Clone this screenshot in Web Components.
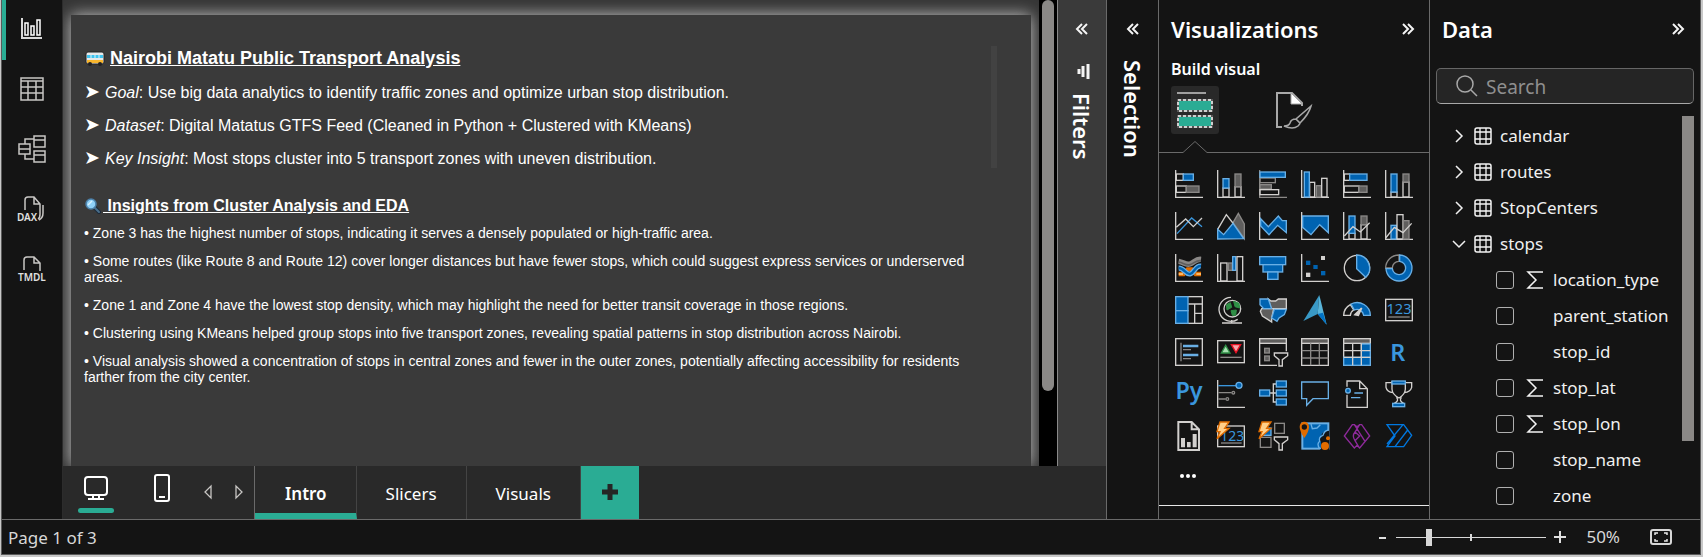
<!DOCTYPE html>
<html lang="en">
<head>
<meta charset="utf-8">
<title>Nairobi Matatu report</title>
<style>
  html, body { margin: 0; }
  body { background: #c8c8c8; font: 17px/24px "Noto Sans", "Open Sans", sans-serif; color: #f0f0f0; }
</style>
</head>
<body>
<report-app></report-app>

<script>
const W = '#d2d0ce', G = '#8a8886', D = '#5f5e5d', B = '#0063b1', L = '#69afe5', O = '#e06c00';
const rect = (x, y, x2, y2, s = W, f = 'none', w = 4) =>
  `<rect x="${x}" y="${y}" width="${x2 - x}" height="${y2 - y}" stroke="${s}" fill="${f}" stroke-width="${w}"/>`;
const line = (p, s = W, w = 4, f = 'none') => `<path d="${p}" stroke="${s}" stroke-width="${w}" fill="${f}"/>`;
const axis = line('M2 0V82H84', W, 4);
const funnel = line('M46 45H86V53L70 65V84H60V65L46 53Z', W, 4, '#141414');
const bolt = line('M9 0H36L23 19H36L0 50L9 29H0Z', O, 4, '#ffd08a');
const digits = `<text x="42" y="54" text-anchor="middle" font-size="44" fill="#3a96dd" font-family="Noto Sans">123</text>`;
const sheet = line('M2 2H82V82H2Z') + rect(2, 2, 82, 16, W, '#605e5c');

/* visual gallery artwork, drawn on an 84-unit grid */
const VISUALS = [
  ['Stacked bar chart', axis + rect(4,12,25,31) + rect(25,12,55,31,L,B) + rect(4,48,34,67) + rect(34,48,72,67,G,D)],
  ['Stacked column chart', axis + rect(18,54,36,81) + rect(18,26,36,54,L,B) + rect(54,50,72,81) + rect(54,12,72,50,G,D)],
  ['Clustered bar chart', line('M2 0V82H84',G) + rect(3,24,49,38,G) + rect(3,6,79,22,L,B) + rect(3,44,37,57,G,D) + rect(3,59,59,74)],
  ['Clustered column chart', axis + rect(26,37,41,81) + rect(10,6,25,81,L,B) + rect(46,47,61,81,G,D) + rect(62,25,78,81)],
  ['100% stacked bar chart', axis + rect(4,12,20,31) + rect(20,12,72,31,L,B) + rect(4,48,48,67) + rect(48,48,72,67,G,D)],
  ['100% stacked column chart', axis + rect(18,66,36,81) + rect(18,12,36,66,L,B) + rect(54,36,72,81) + rect(54,12,72,36,G,D)],

  ['Line chart', axis + line('M6 65L50 18L81 44','#3a96dd') + line('M4 46L32 21L55 44L81 18')],
  ['Area chart', line('M48 32L64 4L82 36V80Z',G,4,D) + line('M2 52L28 8L50 36') + line('M2 81V52L20 68L48 34L80 80Z',L,4,B)],
  ['Stacked area chart', axis + line('M5 20L28 44L58 12L70 26H82V62L56 40L30 68L5 42Z',L,4,B)],
  ['100% stacked area chart', axis + line('M5 12H82V62L56 38L30 68L5 46Z',L,4,B)],
  ['Line and stacked column chart', axis + rect(18,64,36,81) + rect(18,12,36,64,L,B) + rect(54,38,72,81) + rect(54,12,72,38,G,D) + line('M4 72L30 44L52 60L80 32')],
  ['Line and clustered column chart', axis + rect(18,40,34,81,L,B) + rect(36,8,54,81) + rect(55,26,72,81,G,D) + line('M2 78L28 46L54 62L80 34')],

  ['Ribbon chart', axis + line('M11 22C26 24 32 34 45 30S62 14 78 16',G,16) + line('M11 24C26 26 32 36 45 32S62 18 78 20',D,5) + line('M11 60H26L38 46H50L62 60H78',O,13) + line('M11 60H24M64 60H78','#ffd08a',5) + line('M11 42C28 42 32 62 45 60S60 34 78 36',L,15) + line('M11 42C28 42 32 62 45 60S60 34 78 36',B,7)],
  ['Waterfall chart', axis + rect(11,27,30,81) + rect(34,27,46,49,G,D) + rect(47,8,56,49,L,B) + rect(60,8,77,81)],
  ['Funnel', rect(2,8,80,32,L,B) + rect(12,32,71,54,L,B) + rect(26,54,57,76,L,B)],
  ['Scatter chart', axis + rect(60,6,72,18,'none',W) + rect(15,20,28,33,'none',B) + rect(37,33,50,45,'none',B) + rect(60,51,73,64,'none',B) + rect(15,56,28,69,'none',W)],
  ['Pie chart', `<circle cx="42" cy="42" r="38" fill="none" stroke="${W}" stroke-width="4"/>` + line('M41 3A39 39 0 0 1 68 70L41 44Z',L,4,B)],
  ['Donut chart', line('M2 42A39 39 0 0 1 42 3V22A20 20 0 0 0 22 42Z',G) + line('M44 3A39 39 0 1 1 3 44H22A20 20 0 1 0 44 22Z',L,4,B)],

  ['Treemap', rect(2,2,82,82) + line('M40 24H82M59 24V82M59 52H82') + rect(2,2,39,44,L,B) + rect(2,44,39,82,L,B)],
  ['Map', `<circle cx="46" cy="38" r="25" stroke="${W}" stroke-width="4" fill="#141414"/>` + line('M28 26L40 20L44 34L30 42ZM50 16L66 22L68 36L54 32ZM42 44L58 42L56 58L46 58Z','#2f8f46',3,'#2f8f46') + line('M42 4A36 36 0 1 0 62 70M44 72V80M15 81H75')],
  ['Filled map', line('M28 9L36 15H50L58 9H82V38H36Z',W,4,D) + line('M8 38H44L38 66V78L26 70L10 60L4 46Z',W,4,D) + line('M3 9H28L38 38H14L3 26Z',L,4,B) + line('M46 40H82L76 56L60 66L54 76L38 66Z',L,4,B)],
  ['Azure map', `<path d="M55-3L7 75L50 54Z" fill="#3999c6"/><path d="M55-3L77 86L50 54Z" fill="#59b4d9"/><path d="M50 54L77 86L66 50Z" fill="#0072c6"/>`],
  ['Gauge', line('M2 58A40 38 0 0 1 22 26L32 42A20 20 0 0 0 22 58Z') + line('M24 24A40 38 0 0 1 82 58H62A20 20 0 0 0 34 42Z',L,4,B) + line('M36 56L56 36L46 58Z',W,5,W)],
  ['Card', rect(2,10,82,74,W) + line('M10 63H74',G) + digits],

  ['Multi-row card', rect(2,2,82,82) + line('M18 14V70M24 35H48M24 62H48',G) + line('M24 24H70M24 51H70',L,7)],
  ['KPI', rect(2,8,82,74) + line('M10 58H74',G) + line('M13 45L26 22L39 45Z','#2f8f46',4,'#a8dfb2') + line('M43 20H71L57 44Z','#e81123',4,'#f7a6ac')],
  ['Slicer', line('M82 40V2H2V82H54') + rect(2,2,82,16,W,D) + rect(17,31,31,45,G,D) + rect(17,54,31,68,G,D) + funnel],
  ['Table', sheet + line('M2 38H82M2 60H82M29 16V82M55 16V82',G)],
  ['Matrix', sheet + rect(55,18,82,82,L,B) + rect(2,58,82,82,L,B) + line('M2 38H82M2 58H82M29 16V82M55 16V82',W)],
  ['R script visual', `<text x="38" y="70" text-anchor="middle" font-size="70" font-weight="600" fill="#3a96dd" font-family="Noto Sans">R</text>`],

  ['Python visual', `<text x="42" y="58" text-anchor="middle" font-size="70" font-weight="600" fill="#3a96dd" font-family="Noto Sans">Py</text>`],
  ['Key influencers', axis + line('M4 17H60','#3a96dd') + line('M4 38H44M4 57H26',G) + `<g stroke-width="4"><circle cx="66" cy="16" r="9" fill="${B}" stroke="${L}"/><circle cx="49" cy="38" r="4" fill="none" stroke="${G}"/><circle cx="31" cy="57" r="4" fill="none" stroke="${G}"/></g>`],
  ['Decomposition tree', line('M32 39H52M52 12H43V66H52') + rect(2,30,32,48,L,B) + rect(52,3,82,21,L,B) + rect(52,30,82,48,L,B) + rect(52,57,82,75,L,B)],
  ['Q&amp;A', line('M2 6H82V56H36L17 76V56H2Z',L)],
  ['Narrative', line('M12 20V3H50L73 26V82H12V44M50 3V26H73') + line('M34 39H60M24 53H52',L) + `<circle cx="15" cy="32" r="7" fill="${B}" stroke="${L}" stroke-width="4"/>`],
  ['Goals', line('M21 5V28Q22 44 42 54Q60 44 61 28V5ZM21 8H3V22Q6 36 24 38M61 8H80V22Q76 36 58 38M34 52Q44 62 28 70M50 52Q40 62 56 70') + rect(21,3,61,12,L,B) + rect(23,70,59,80,L,B)],

  ['Paginated report', line('M10 0H50L72 22V84H10ZM50 0V22H72',W,6) + `<path d="M18 48H30V76H18ZM36 60H47V76H36ZM53 36H65V76H53Z" fill="${W}"/>`],
  ['New card', rect(2,12,82,74) + line('M12 63H74',G) + `<text x="46" y="56" text-anchor="middle" font-size="42" fill="#3a96dd" font-family="Noto Sans">123</text>` + bolt],
  ['New slicer', rect(47,4,76,34,G) + rect(4,46,36,76,G) + rect(8,18,36,40,L,B) + funnel + bolt],
  ['ArcGIS maps', rect(4,4,82,80,L,B,6) + `<path d="M60 80V60Q50 50 62 46Q58 28 84 26V86H54Z" fill="#141414"/>` + line('M56 80Q46 66 56 58Q52 44 66 40Q70 26 82 24M30 6L34 20L48 18L58 8',L) + `<path d="M-4 14A14 15 0 0 1 24 14Q24 28 10 48Q-4 28-4 14Z" fill="${O}"/><circle cx="10" cy="15" r="8" fill="#141414"/><circle cx="72" cy="72" r="12" fill="${O}"/><circle cx="81" cy="49" r="6" fill="${O}"/>`],
  ['Power Apps', line('M28 8L4 42L34 78L42 70L50 78L80 42L56 8H50L42 14L34 8ZM34 8L66 58M50 8L36 30Q26 42 36 56L48 76M36 30L50 42L36 56','#8e2a9b',4)],
  ['Power Automate', line('M6 8H56L80 40L56 74H6L30 42ZM54 8L6 66M68 24L30 74','#0078e0',4)],
];

/* shell icons: [width, height, markup] */
const ICONS = {
  report: [22, 22, '<path d="M1 0V20H21" stroke="#d8d8d8" stroke-width="2"/><path d="M4 5H7V17H4ZM10 8H13V17H10ZM16 2H19V17H16Z" stroke="#fff" stroke-width="1.5"/>'],
  table: [24, 24, '<path d="M1 1H23V23H1ZM1 4H23M1 10H23M1 16H23M8 4V23M16 4V23" stroke="#c8c6c4" stroke-width="1.5"/>'],
  model: [28, 28, '<path d="M1 9H12V19H1ZM1 14H12M16 1H27V12H16ZM16 5H27M16 16H27V27H16ZM16 20H27M7 9V4H16M7 19V24H16" stroke="#c8c6c4" stroke-width="1.5"/>'],
  dax: [28, 26, '<path d="M7 14V4Q7 1 10 1H16L22 8V18Q22 22 20 23M16 1V8H22M25 9V17Q25 22 21 24" stroke="#c8c6c4" stroke-width="1.5"/><text x="-1" y="25" font-size="10" font-weight="600" fill="#e0e0e0" font-family="Noto Sans">DAX</text>'],
  tmdl: [28, 26, '<path d="M6 14V4Q6 1 9 1H16L22 7V15M16 1V7H22" stroke="#c8c6c4" stroke-width="1.5"/><text x="0" y="25" font-size="10" font-weight="600" fill="#e0e0e0" font-family="Noto Sans">TMDL</text>'],
  collapse: [12, 12, '<path d="M6 1L1 6L6 11M11 1L6 6L11 11" stroke="#f4f4f4" stroke-width="2"/>'],
  expand: [12, 12, '<path d="M1 1L6 6L1 11M6 1L11 6L6 11" stroke="#f4f4f4" stroke-width="2"/>'],
  filter: [14, 15, '<path d="M13 0V15M8 2V13M4 5V10" stroke="#f4f4f4" stroke-width="3"/>'],
  desktop: [24, 24, '<rect x="1" y="1" width="22" height="18" rx="3" stroke="#fff" stroke-width="2"/><path d="M4 23H20M9 19V23M15 19V23" stroke="#fff" stroke-width="2"/>'],
  phone: [16, 28, '<rect x="1" y="1" width="14" height="26" rx="2" stroke="#fff" stroke-width="2"/><path d="M5 23H11" stroke="#fff" stroke-width="2"/>'],
  prev: [8, 14, '<path d="M7 1V13L1 7Z" stroke="#c8c6c4" stroke-width="1.3"/>'],
  next: [8, 14, '<path d="M1 1V13L7 7Z" stroke="#c8c6c4" stroke-width="1.3"/>'],
  add: [18, 18, '<path d="M9 1V17M1 9H17" stroke="#252525" stroke-width="5"/>'],
  build: [36, 36, '<path d="M0 1H29" stroke="#a0a0a0" stroke-width="2"/><path d="M1 8H35V19H1ZM1 24H35V35H1Z" fill="#2aac94" stroke="#555" stroke-width="2"/><path d="M1 8H35V19H1ZM1 24H35V35H1Z" stroke="#d0d0d0" stroke-width="2" stroke-dasharray="3 2"/>'],
  format: [36, 36, '<path d="M6 35H1V1H16L26 11V14" stroke="#a8a8a8" stroke-width="2"/><path d="M15 1V12H26Z" fill="#fff" stroke="#a8a8a8"/><path d="M35 14L20 27L24 31Q33 22 35 14ZM20 27Q15 27 14 31Q13 34 8 34Q17 38 22 34Q24 32 24 31" stroke="#a8a8a8" stroke-width="1.6"/>'],
  search: [22, 22, '<circle cx="9" cy="9" r="8" stroke="#a8a8a8" stroke-width="1.5"/><path d="M15 15L21 21" stroke="#a8a8a8" stroke-width="1.5"/>'],
  closed: [12, 12, '<path d="M3 0L9 6L3 12" stroke="#f0f0f0" stroke-width="1.5"/>'],
  open: [12, 12, '<path d="M0 3L6 9L12 3" stroke="#f0f0f0" stroke-width="1.5"/>'],
  grid: [18, 18, '<rect x="1" y="1" width="16" height="16" rx="2" stroke="#f4f4f4" stroke-width="1.5"/><path d="M1 5H17M1 12H17M6 1V17M12 1V17" stroke="#f4f4f4" stroke-width="1.3"/>'],
  sigma: [17, 18, '<path d="M16 1H1L9 9L1 17H16" stroke="#f4f4f4" stroke-width="1.5"/>'],
  none: [17, 18, ''],
  fit: [22, 16, '<rect x="1" y="1" width="20" height="14" rx="2" stroke="#d8d8d8" stroke-width="2"/><path d="M8 4H5V6M5 10V12H8M14 4H17V6M17 10V12H14" stroke="#e8e8e8" stroke-width="1.5"/>'],
  bus: [18, 16, '<rect x="0" y="2" width="18" height="12" rx="2" fill="#e8e8e8" stroke="#222" stroke-width="1"/><path d="M1 5H17V8H1Z" fill="#3fc3ee"/><path d="M5 5V8M9 5V8M13 5V8" stroke="#d9f4ff"/><path d="M1 10H17V13H1Z" fill="#f8b62d"/><circle cx="4" cy="14" r="2" fill="#222"/><circle cx="14" cy="14" r="2" fill="#222"/>'],
  lens: [16, 16, '<path d="M9 9L14 14" stroke="#1d2b3a" stroke-width="4" stroke-linecap="round"/><path d="M9 9L14 14" stroke="#4a6f8c" stroke-width="2" stroke-linecap="round"/><circle cx="6" cy="6" r="5" fill="#8fd0f7" stroke="#4b7fa8" stroke-width="1.5"/><path d="M3 7L7 3" stroke="#d9f1ff" stroke-width="1.5"/>'],
};

const RESET = `
  *, *::before, *::after { box-sizing: border-box; }
  button { all: unset; box-sizing: border-box; cursor: pointer; display: flex; align-items: center; justify-content: center; }
  h1, h2, h3, p, ul { margin: 0; padding: 0; }
  ul { list-style: none; }
`;
function element(name, render) {
  customElements.define(name, class extends HTMLElement {
    constructor() {
      super();
      this.attachShadow({ mode: 'open' });
    }
    connectedCallback() {
      const t = document.createElement('template');
      t.innerHTML = render(this);
      this.shadowRoot.replaceChildren(t.content.cloneNode(true));
    }
  });
}

element('ui-icon', el => {
  const [w, h, art] = ICONS[el.getAttribute('name')];
  return `<style>:host { display: inline-flex; flex: none; } svg { overflow: visible; display: block; }</style>
    <svg width="${w}" height="${h}" viewBox="0 0 ${w} ${h}" fill="none" aria-hidden="true">${art}</svg>`;
});

element('nav-rail', () => `
  <style>${RESET}
    :host { display: block; background: #141414; border-right: 1px solid #2c2c2c; }
    nav { display: flex; flex-direction: column; }
    button { height: 60px; padding-bottom: 2px; }
    button.on { border-left: 4px solid #2aac94; padding-right: 4px; }
  </style>
  <nav aria-label="Views">
    <button class="on" aria-label="Report view"><ui-icon name="report"></ui-icon></button>
    <button aria-label="Table view"><ui-icon name="table"></ui-icon></button>
    <button aria-label="Model view"><ui-icon name="model"></ui-icon></button>
    <button aria-label="DAX query view"><ui-icon name="dax"></ui-icon></button>
    <button aria-label="TMDL view"><ui-icon name="tmdl"></ui-icon></button>
  </nav>`);

element('report-canvas', () => `
  <style>${RESET}
    :host { display: grid; grid-template-columns: minmax(0, 1fr) 18px; background: #353535; overflow: hidden;
            font-family: "Liberation Sans", Arial, sans-serif; color: #fff; }
    .page { margin: 15px 8px 0; padding: 31px 13px 0; background: #3a3a3a; box-shadow: 0 0 15px #c6c6c6; }
    .intro { display: flex; justify-content: space-between; height: 122px; margin-right: 21px; }
    .bar { width: 6px; background: #424242; flex: none; }
    h1, h2 { display: flex; align-items: center; }
    h1 { font-size: 18px; line-height: 24px; gap: 6px; padding-left: 2px; }
    h2 { font-size: 16px; line-height: 20px; gap: 2px; padding-left: 1px; margin-top: 28px; }
    u { white-space: pre; }
    .lead { font-size: 16px; line-height: 33px; padding-top: 5px; }
    .lead li { display: flex; align-items: baseline; height: 33px; white-space: pre; }
    .lead span { width: 21px; font-size: 19px; font-family: "DejaVu Sans", sans-serif; }
    .notes { font-size: 14px; line-height: 16px; display: flex; flex-direction: column; gap: 12px; margin: 9px 46px 0 0; }
    .track { background: #000; padding: 0 3px; }
    .thumb { height: 391px; border-radius: 6px; background: #8a8886; }
  </style>
  <article class="page">
    <div class="intro">
      <div>
        <h1><ui-icon name="bus"></ui-icon><u>Nairobi Matatu Public Transport Analysis</u></h1>
        <ul class="lead">
          <li><span>➤</span><i>Goal</i>: Use big data analytics to identify traffic zones and optimize urban stop distribution.</li>
          <li><span>➤</span><i>Dataset</i>: Digital Matatus GTFS Feed (Cleaned in Python + Clustered with KMeans)</li>
          <li><span>➤</span><i>Key Insight</i>: Most stops cluster into 5 transport zones with uneven distribution.</li>
        </ul>
      </div>
      <div class="bar"></div>
    </div>
    <h2><ui-icon name="lens"></ui-icon><u> Insights from Cluster Analysis and EDA</u></h2>
    <ul class="notes">
      <li>• Zone 3 has the highest number of stops, indicating it serves a densely populated or high-traffic area.</li>
      <li>• Some routes (like Route 8 and Route 12) cover longer distances but have fewer stops, which could suggest express services or underserved areas.</li>
      <li>• Zone 1 and Zone 4 have the lowest stop density, which may highlight the need for better transit coverage in those regions.</li>
      <li>• Clustering using KMeans helped group stops into five transport zones, revealing spatial patterns in stop distribution across Nairobi.</li>
      <li>• Visual analysis showed a concentration of stops in central zones and fewer in the outer zones, potentially affecting accessibility for residents farther from the city center.</li>
    </ul>
  </article>
  <div class="track"><div class="thumb"></div></div>`);

element('page-tabs', () => `
  <style>${RESET}
    :host { display: flex; height: 53px; background: #292929; color: #fff; }
    .modes { display: flex; align-items: stretch; width: 192px; padding-left: 10px; border-right: 1px solid #6a6a6a; }
    .modes button { flex: none; flex-direction: column; justify-content: flex-start; padding-top: 10px; }
    .modes .view { width: 46px; }
    .view.on::after { content: ""; width: 36px; height: 5px; border-radius: 3px; background: #2aac94; margin-top: 8px; }
    .modes .view + .view { margin: 0 7px 0 20px; padding-top: 8px; }
    .modes .step { width: 31px; padding-top: 19px; }
    .tab { padding: 2px 29px 0; border-right: 1px solid #444; }
    .tab.on { font-weight: 600; border-bottom: 6px solid #2aac94; padding: 8px 29px 0 30px; }
    .add { width: 58px; background: #2aac94; padding-bottom: 2px; }
  </style>
  <div class="modes">
    <button class="view on" aria-label="Desktop layout"><ui-icon name="desktop"></ui-icon></button>
    <button class="view" aria-label="Mobile layout"><ui-icon name="phone"></ui-icon></button>
    <button class="step" aria-label="Previous page"><ui-icon name="prev"></ui-icon></button>
    <button class="step" aria-label="Next page"><ui-icon name="next"></ui-icon></button>
  </div>
  <button class="tab on">Intro</button>
  <button class="tab">Slicers</button>
  <button class="tab">Visuals</button>
  <button class="add" aria-label="New page"><ui-icon name="add"></ui-icon></button>`);

element('collapsed-pane', () => `
  <style>${RESET}
    :host { display: flex; flex-direction: column; align-items: center; padding-top: 23px; color: #fff; background: #141414; }
    h2 { writing-mode: vertical-rl; font-size: 22px; line-height: 28px; font-weight: 600; display: flex; align-items: center; gap: 14px; margin-top: 25px; }
    ::slotted(ui-icon) { margin-top: 4px; }
  </style>
  <button aria-label="Expand pane"><ui-icon name="collapse"></ui-icon></button>
  <h2><slot></slot></h2>`);

element('visual-gallery', () => `
  <style>${RESET}
    :host { display: grid; grid-template-columns: repeat(6, 28px); gap: 14px; }
    svg { display: block; overflow: visible; }
  </style>
  ${VISUALS.map(([label, art]) => `<button aria-label="${label}"><svg width="28" height="28" viewBox="0 0 84 84" aria-hidden="true">${art}</svg></button>`).join('')}`);

element('visualizations-pane', () => `
  <style>${RESET}
    :host { display: flex; flex-direction: column; background: #141414; }
    header { display: flex; justify-content: space-between; align-items: center; padding: 15px 15px 0 12px; }
    h2 { font-size: 22px; line-height: 28px; font-weight: 600; color: #fff; }
    h3 { font-size: 16px; line-height: 24px; font-weight: 600; color: #fff; padding: 14px 12px 0; }
    .modes { display: flex; gap: 51px; padding: 5px 12px 0; }
    .modes button { width: 48px; height: 48px; border-radius: 3px; }
    .modes .on { background: #292929; }
    .edge { display: flex; height: 12px; margin: 7px 0 17px; }
    .edge::before, .edge::after { content: ""; border-bottom: 1px solid #6a6a6a; }
    .edge::before { width: 24px; }
    .edge::after { flex: 1; }
    visual-gallery { margin-left: 16px; }
    .more { width: 16px; height: 4px; margin: 24px 0 0 21px; gap: 2px; }
    .more i { width: 4px; height: 4px; border-radius: 2px; background: #fff; }
    footer { border-top: 1px solid #e8e8e8; margin-top: 27px; height: 14px; }
  </style>
  <header><h2>Visualizations</h2><button aria-label="Collapse pane"><ui-icon name="expand"></ui-icon></button></header>
  <h3>Build visual</h3>
  <div class="modes">
    <button class="on" aria-label="Build visual"><ui-icon name="build"></ui-icon></button>
    <button aria-label="Format page"><ui-icon name="format"></ui-icon></button>
  </div>
  <div class="edge"><svg width="24" height="12" viewBox="0 0 24 12" fill="none" stroke="#6a6a6a" aria-hidden="true"><path d="M0 11.5L12 .5L24 11.5"/></svg></div>
  <visual-gallery></visual-gallery>
  <button class="more" aria-label="More visuals"><i></i><i></i><i></i></button>
  <footer></footer>`);

element('table-row', el => `
  <style>${RESET}
    :host { display: block; }
    button { height: 36px; justify-content: flex-start; }
    ui-icon + ui-icon { margin: 0 8px 0 9px; }
  </style>
  <button aria-expanded="${el.hasAttribute('open')}"><ui-icon name="${el.hasAttribute('open') ? 'open' : 'closed'}"></ui-icon><ui-icon name="grid"></ui-icon><slot></slot></button>`);

element('field-row', el => `
  <style>${RESET}
    :host { display: block; padding-left: 43px; }
    label { display: flex; align-items: center; height: 36px; }
    input { appearance: none; width: 18px; height: 18px; margin: 0 13px 0 0; border: 1px solid #b0b0b0; border-radius: 3px; background: none; }
    ui-icon { margin-right: 9px; }
  </style>
  <label><input type="checkbox"><ui-icon name="${el.hasAttribute('sum') ? 'sigma' : 'none'}"></ui-icon><slot></slot></label>`);

element('data-pane', () => `
  <style>${RESET}
    :host { display: block; background: #141414; }
    header { display: flex; justify-content: space-between; align-items: center; padding: 15px 16px 0 12px; }
    h2 { font-size: 22px; line-height: 28px; font-weight: 600; color: #fff; }
    .search { display: flex; align-items: center; gap: 8px; height: 36px; margin: 25px 6px 0; padding: 0 19px; border: 1px solid #666; border-bottom-color: #a8a8a8; border-radius: 5px; background: #252525; }
    input { all: unset; flex: 1; min-width: 0; font-size: 19px; line-height: 28px; padding-top: 2px; }
    input::placeholder { color: #8f8f8f; opacity: 1; }
    .body { display: flex; justify-content: space-between; padding: 12px 6px 0 23px; }
    .list { padding-top: 2px; white-space: nowrap; }
    .thumb { width: 12px; height: 325px; background: #8a8886; }
  </style>
  <header><h2>Data</h2><button aria-label="Collapse pane"><ui-icon name="expand"></ui-icon></button></header>
  <div class="search"><ui-icon name="search"></ui-icon><input type="search" placeholder="Search" aria-label="Search"></div>
  <div class="body">
    <div class="list">
      <table-row>calendar</table-row>
      <table-row>routes</table-row>
      <table-row>StopCenters</table-row>
      <table-row open>stops</table-row>
      <field-row sum>location_type</field-row>
      <field-row>parent_station</field-row>
      <field-row>stop_id</field-row>
      <field-row sum>stop_lat</field-row>
      <field-row sum>stop_lon</field-row>
      <field-row>stop_name</field-row>
      <field-row>zone</field-row>
    </div>
    <div class="thumb"></div>
  </div>`);

element('status-bar', () => `
  <style>${RESET}
    :host { display: flex; justify-content: space-between; align-items: center; height: 35px; padding: 0 28px 0 6px; border-top: 1px solid #6a6a6a; background: #141414; color: #d8d8d8; }
    span { padding-top: 2px; }
    .zoom { display: flex; align-items: center; }
    .zoom button { width: 12px; height: 20px; }
    .zoom .fit { width: 22px; }
    input { appearance: none; width: 150px; height: 18px; margin: 0 8px; background:
      linear-gradient(#d8d8d8, #d8d8d8) center / 2px 7px no-repeat, linear-gradient(#d8d8d8, #d8d8d8) center / 100% 1px no-repeat; }
    input::-webkit-slider-thumb { appearance: none; width: 6px; height: 17px; background: #d8d8d8; }
    output { margin: 0 30px 0 20px; }
  </style>
  <span>Page 1 of 3</span>
  <div class="zoom">
    <button aria-label="Zoom out"><svg width="12" height="12" aria-hidden="true"><path d="M3 7H10" stroke="#e0e0e0" stroke-width="2"/></svg></button>
    <input type="range" min="0" max="240" value="50" aria-label="Zoom">
    <button aria-label="Zoom in"><svg width="12" height="12" aria-hidden="true"><path d="M0 6H12M6 0V12" stroke="#e0e0e0" stroke-width="2"/></svg></button>
    <output>50%</output>
    <button class="fit" aria-label="Fit to page"><ui-icon name="fit"></ui-icon></button>
  </div>`);

element('report-app', () => `
  <style>${RESET}
    :host { display: block; padding: 0 2px 2px 1px; }
    .window { display: flex; flex-direction: column; min-height: calc(100vh - 2px); border: solid #5a5a5a; border-width: 0 1px 1px; }
    .work { flex: 1; display: grid; grid-template-columns: 61px minmax(0, 1fr) 52px 271px 270px; }
    .stage { display: grid; grid-template: minmax(0, 1fr) auto / minmax(0, 1fr) 49px; }
    page-tabs { grid-column: 1 / -1; }
    .filters { background: #3a3a3a; border-left: 1px solid #8a8a8a; }
    .stage, .selection, visualizations-pane { border-right: 1px solid #6a6a6a; }
  </style>
  <div class="window">
    <main class="work">
      <nav-rail></nav-rail>
      <section class="stage">
        <report-canvas></report-canvas>
        <collapsed-pane class="filters"><ui-icon name="filter"></ui-icon>Filters</collapsed-pane>
        <page-tabs></page-tabs>
      </section>
      <collapsed-pane class="selection">Selection</collapsed-pane>
      <visualizations-pane></visualizations-pane>
      <data-pane></data-pane>
    </main>
    <status-bar></status-bar>
  </div>`);
</script>
</body>
</html>
